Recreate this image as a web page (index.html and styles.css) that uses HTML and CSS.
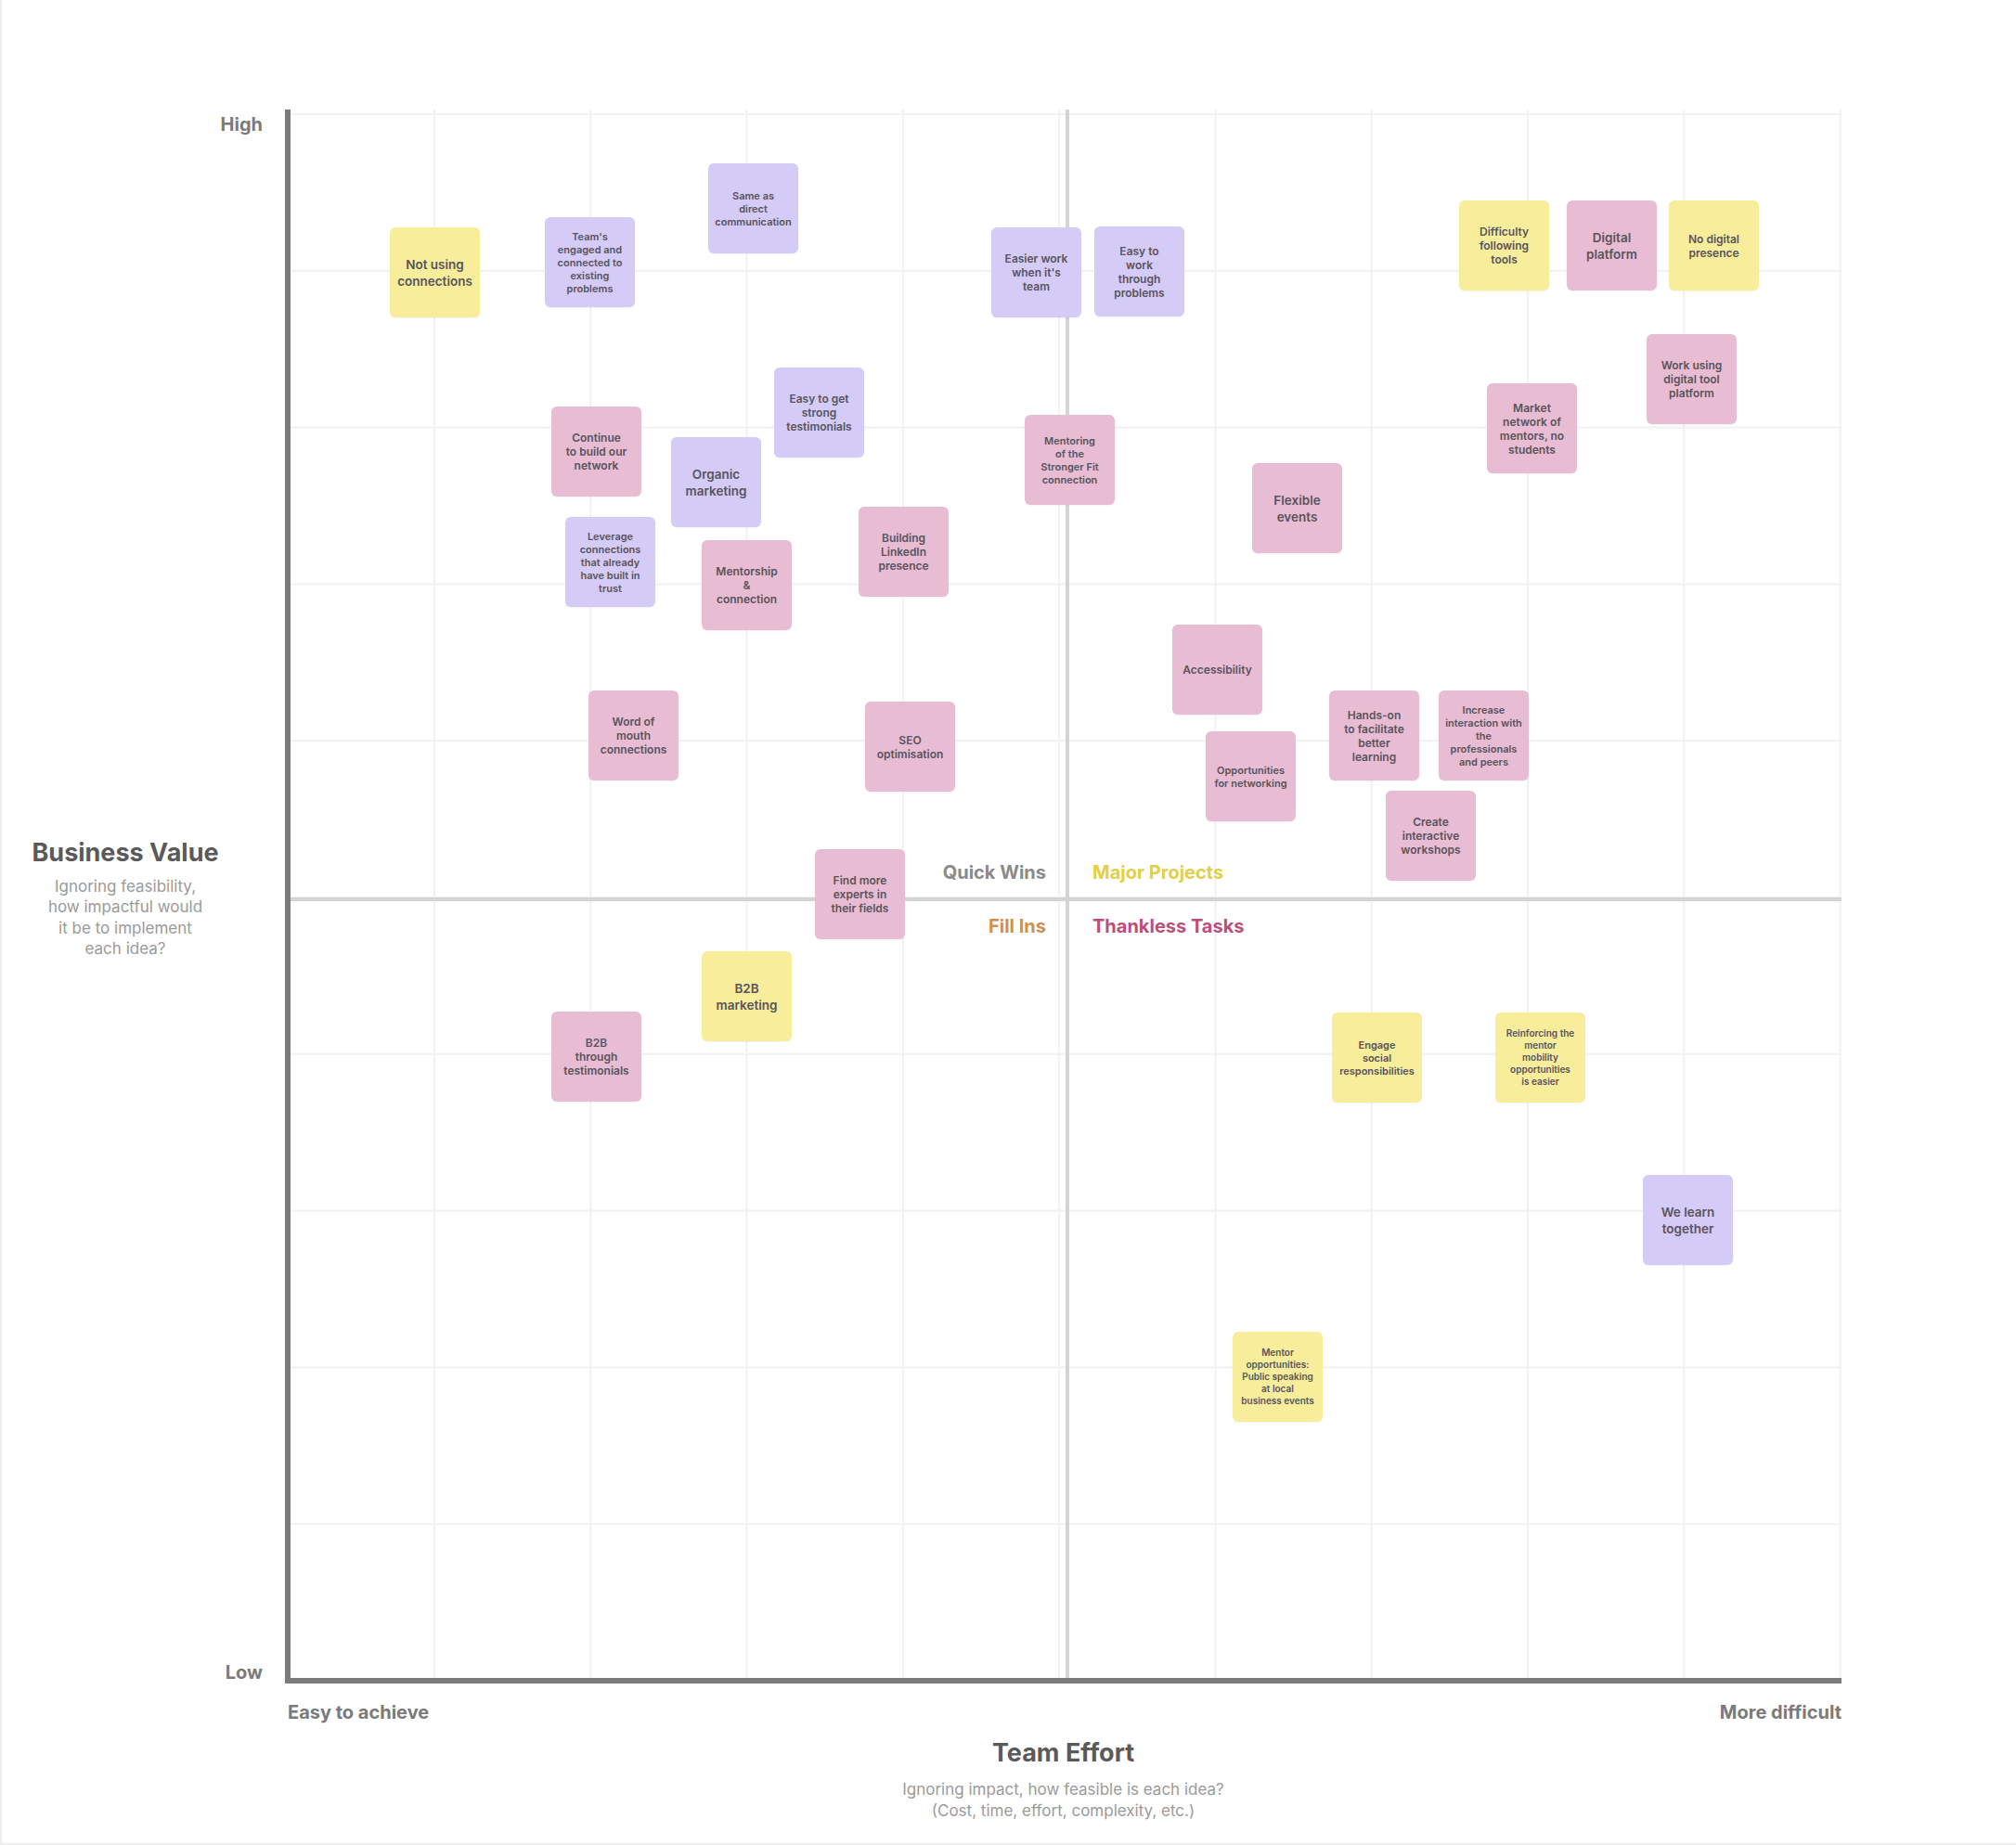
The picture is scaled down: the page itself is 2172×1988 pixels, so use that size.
FILE: index.html
```html
<!DOCTYPE html>
<html lang="en">
<head>
<meta charset="utf-8">
<title>Value vs Effort Matrix</title>
<link rel="stylesheet" href="styles.css">
</head>
<body>
<div class="frame">
  <div class="yaxis">
    <div class="tick">High</div>
    <div class="ytitle">
      <div class="axis-title">Business Value</div>
      <div class="axis-sub">Ignoring feasibility,<br>how impactful would<br>it be to implement<br>each idea?</div>
    </div>
    <div class="tick">Low</div>
  </div>

  <div class="plot">
    <div class="quadrants">
      <div class="q q-quick">Quick Wins</div>
      <div class="q q-major">Major Projects</div>
      <div class="q q-fill">Fill Ins</div>
      <div class="q q-thank">Thankless Tasks</div>
    </div>

    <div class="sticky yellow lg" style="left:107px;top:127px">Not using<br>connections</div>
    <div class="sticky purple sm" style="left:274px;top:116px">Team's<br>engaged and<br>connected to<br>existing<br>problems</div>
    <div class="sticky purple sm" style="left:450px;top:58px">Same as<br>direct<br>communication</div>
    <div class="sticky purple" style="left:755px;top:127px">Easier work<br>when it's<br>team</div>
    <div class="sticky purple" style="left:866px;top:126px">Easy to<br>work<br>through<br>problems</div>
    <div class="sticky yellow" style="left:1259px;top:98px">Difficulty<br>following<br>tools</div>
    <div class="sticky pink lg" style="left:1375px;top:98px">Digital<br>platform</div>
    <div class="sticky yellow" style="left:1485px;top:98px">No digital<br>presence</div>
    <div class="sticky pink" style="left:1461px;top:242px">Work using<br>digital tool<br>platform</div>
    <div class="sticky pink" style="left:1289px;top:295px">Market<br>network of<br>mentors, no<br>students</div>
    <div class="sticky pink" style="left:281px;top:320px">Continue<br>to build our<br>network</div>
    <div class="sticky purple" style="left:521px;top:278px">Easy to get<br>strong<br>testimonials</div>
    <div class="sticky purple lg" style="left:410px;top:353px">Organic<br>marketing</div>
    <div class="sticky pink sm" style="left:791px;top:329px">Mentoring<br>of the<br>Stronger Fit<br>connection</div>
    <div class="sticky pink lg" style="left:1036px;top:381px">Flexible<br>events</div>
    <div class="sticky purple sm" style="left:296px;top:439px">Leverage<br>connections<br>that already<br>have built in<br>trust</div>
    <div class="sticky pink" style="left:443px;top:464px">Mentorship<br>&amp;<br>connection</div>
    <div class="sticky pink" style="left:612px;top:428px">Building<br>LinkedIn<br>presence</div>
    <div class="sticky pink" style="left:950px;top:555px">Accessibility</div>
    <div class="sticky pink" style="left:321px;top:626px">Word of<br>mouth<br>connections</div>
    <div class="sticky pink" style="left:619px;top:638px">SEO<br>optimisation</div>
    <div class="sticky pink sm" style="left:986px;top:670px">Opportunities<br>for networking</div>
    <div class="sticky pink" style="left:1119px;top:626px">Hands-on<br>to facilitate<br>better<br>learning</div>
    <div class="sticky pink sm" style="left:1237px;top:626px">Increase<br>interaction with<br>the<br>professionals<br>and peers</div>
    <div class="sticky pink" style="left:1180px;top:734px">Create<br>interactive<br>workshops</div>
    <div class="sticky pink" style="left:565px;top:797px">Find more<br>experts in<br>their fields</div>
    <div class="sticky yellow lg" style="left:443px;top:907px">B2B<br>marketing</div>
    <div class="sticky pink" style="left:281px;top:972px">B2B<br>through<br>testimonials</div>
    <div class="sticky yellow sm" style="left:1122px;top:973px">Engage<br>social<br>responsibilities</div>
    <div class="sticky yellow xs" style="left:1298px;top:973px">Reinforcing the<br>mentor<br>mobility<br>opportunities<br>is easier</div>
    <div class="sticky purple lg" style="left:1457px;top:1148px">We learn<br>together</div>
    <div class="sticky yellow xs" style="left:1015px;top:1317px">Mentor<br>opportunities:<br>Public speaking<br>at local<br>business events</div>
  </div>

  <div class="xaxis">
    <div class="tick">Easy to achieve</div>
    <div class="tick">More difficult</div>
  </div>

  <div class="xtitle">
    <div class="axis-title">Team Effort</div>
    <div class="axis-sub">Ignoring impact, how feasible is each idea?<br>(Cost, time, effort, complexity, etc.)</div>
  </div>
</div>
</body>
</html>
```

FILE: styles.css
```css
* {
  box-sizing: border-box;
}

html, body {
  margin: 0;
  padding: 0;
  background: #ffffff;
}

body {
  font-family: Inter, "Noto Sans", "Liberation Sans", sans-serif;
  color: #555555;
}

.frame {
  width: 2172px;
  height: 1988px;
  border-left: 2px solid #eeeeee;
  border-bottom: 2px solid #eeeeee;
  padding-top: 118px;
  display: grid;
  grid-template-columns: 305px 1677px;
  grid-template-rows: 1696px auto auto;
  align-content: start;
}

/* ---------- Y axis ---------- */
.yaxis {
  display: flex;
  flex-direction: column;
  justify-content: space-between;
  align-items: flex-end;
  padding: 4px 24px 0 0;
}

.tick {
  font-size: 20px;
  line-height: 24px;
  font-weight: 700;
  color: #7a7a7a;
}

.ytitle {
  align-self: flex-start;
  width: 266px;
  text-align: center;
}

.axis-title {
  font-size: 27px;
  line-height: 32px;
  font-weight: 700;
  color: #5a5a5a;
}

.axis-sub {
  margin-top: 9px;
  font-size: 17px;
  line-height: 22.5px;
  color: #9a9a9a;
}

/* ---------- Plot ---------- */
.plot {
  position: relative;
  border-left: 6px solid #7b7b7b;
  border-bottom: 6px solid #7b7b7b;
  background-color: #ffffff;
  background-image:
    linear-gradient(to right, transparent 835px, #d4d4d4 835px, #d4d4d4 839px, transparent 839px),
    linear-gradient(to bottom, transparent 849px, #d4d4d4 849px, #d4d4d4 853px, transparent 853px),
    linear-gradient(to right, #f1f1f1 2px, transparent 2px),
    linear-gradient(to bottom, #f1f1f1 2px, transparent 2px);
  background-size:
    100% 100%,
    100% 100%,
    168.3px 100%,
    100% 168.8px;
  background-position:
    0 0,
    0 0,
    -14.3px 0,
    0 4px;
  background-repeat: no-repeat, no-repeat, repeat-x, repeat-y;
}

.quadrants {
  position: absolute;
  left: 0;
  top: 812px;
  display: grid;
  grid-template-columns: 814px auto;
  column-gap: 50px;
  row-gap: 38px;
  font-size: 20px;
  line-height: 20px;
  font-weight: 700;
}

.q-quick,
.q-fill {
  text-align: right;
}

.q-quick { color: #8a8a8a; }
.q-major { color: #e2cf48; }
.q-fill { color: #cf8f4f; }
.q-thank { color: #bb4f78; }

/* ---------- Sticky notes ---------- */
.sticky {
  position: absolute;
  width: 97px;
  height: 97px;
  border-radius: 6px;
  padding: 6px;
  display: flex;
  align-items: center;
  justify-content: center;
  text-align: center;
  font-size: 12px;
  line-height: 15px;
  font-weight: 600;
  color: #58535c;
  box-shadow: 0 1px 2px rgba(0, 0, 0, 0.05);
}

.sticky.sm {
  font-size: 11px;
  line-height: 14px;
}

.sticky.xs {
  font-size: 10px;
  line-height: 13px;
}

.sticky.lg {
  font-size: 13.5px;
  line-height: 18px;
}

.yellow { background: #f7ed9b; }
.pink { background: #e8bcd3; }
.purple { background: #d4cbf6; }

/* ---------- X axis ---------- */
.xaxis {
  grid-column: 2;
  display: flex;
  justify-content: space-between;
  padding: 19px 0 0 3px;
}

.xtitle {
  grid-column: 2;
  text-align: center;
  padding-top: 16px;
}

.xtitle .axis-sub {
  margin-top: 12px;
}
```
